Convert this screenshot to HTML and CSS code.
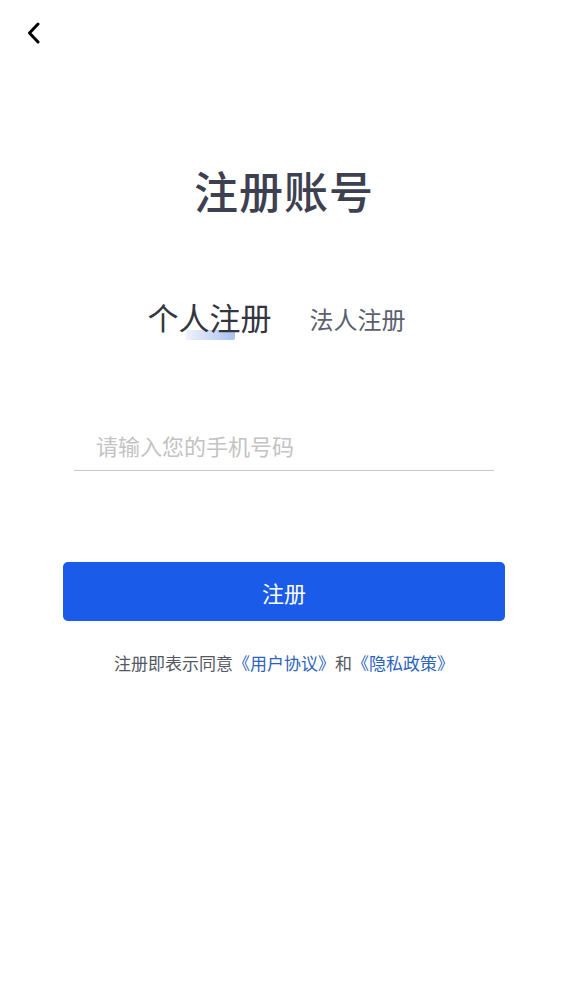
FILE: index.html
```html
<!DOCTYPE html>
<html lang="zh-CN">
<head>
  <meta charset="utf-8">
  <title>注册账号</title>
  <link rel="stylesheet" href="styles.css">
</head>
<body>

<div class="page">
  <div class="topbar">
    <a class="back" href="#">
      <svg width="16" height="22" viewBox="0 0 16 22">
        <path d="M12 2 L3.5 11 L12 20" fill="none" stroke="#000" stroke-width="3" stroke-linecap="round" stroke-linejoin="round"/>
      </svg>
    </a>
  </div>

  <h1 class="title">注册账号</h1>

  <div class="tabs">
    <div class="tab active">个人注册<span class="bar"></span></div>
    <div class="tab">法人注册</div>
  </div>

  <div class="field">
    <input type="tel" placeholder="请输入您的手机号码">
  </div>

  <button class="submit">注册</button>

  <p class="agree">注册即表示同意<a href="#">《用户协议》</a>和<a href="#">《隐私政策》</a></p>
</div>

</body>
</html>
```

FILE: styles.css
```css
body{
  margin: 0;
  background-color: #fff;
  font-family: "Noto Sans CJK SC", "Noto Sans", sans-serif;
}

.page{
  width: 568px;
  min-height: 986px;
}

.topbar{
  height: 66px;
  padding: 22px 0 0 26px;
  box-sizing: border-box;
}

.back{
  display: block;
  width: 16px;
  height: 22px;
}

.title{
  margin: 94px 0 0;
  text-align: center;
  font-size: 44px;
  font-weight: 500;
  line-height: 60px;
  color: #3d4050;
  letter-spacing: 1px;
}

.tabs{
  display: flex;
  justify-content: center;
  align-items: flex-end;
  gap: 38px;
  margin-top: 75px;
  padding-right: 15px;
}

.tab{
  position: relative;
  font-size: 24px;
  line-height: 40px;
  color: #5c5f6e;
}

.tab.active{
  font-size: 31px;
  line-height: 44px;
  color: #33363f;
}

.bar{
  position: absolute;
  left: 38px;
  top: 35px;
  width: 49px;
  height: 10px;
  border-radius: 2px;
  background: linear-gradient(90deg, #eef2fb, #a9c1ef);
  z-index: -1;
}

.field{
  margin: 85px 74px 0;
  border-bottom: 1px solid #c8c8c8;
}

.field input{
  display: block;
  width: 100%;
  box-sizing: border-box;
  border: none;
  outline: none;
  padding: 0 0 4px 22px;
  height: 46px;
  font-family: inherit;
  font-size: 22px;
  color: #333;
  background: transparent;
}

.field input::placeholder{
  color: #c3c3c3;
}

.submit{
  display: block;
  margin: 91px 63px 0;
  width: 442px;
  height: 59px;
  border: none;
  border-radius: 5px;
  background-color: #1a5be9;
  color: #fff;
  font-family: inherit;
  font-size: 22px;
}

.agree{
  margin: 30px 0 0;
  text-align: center;
  font-size: 17px;
  color: #555862;
  line-height: 24px;
}

.agree a{
  color: #2b63bd;
  text-decoration: none;
}
```
